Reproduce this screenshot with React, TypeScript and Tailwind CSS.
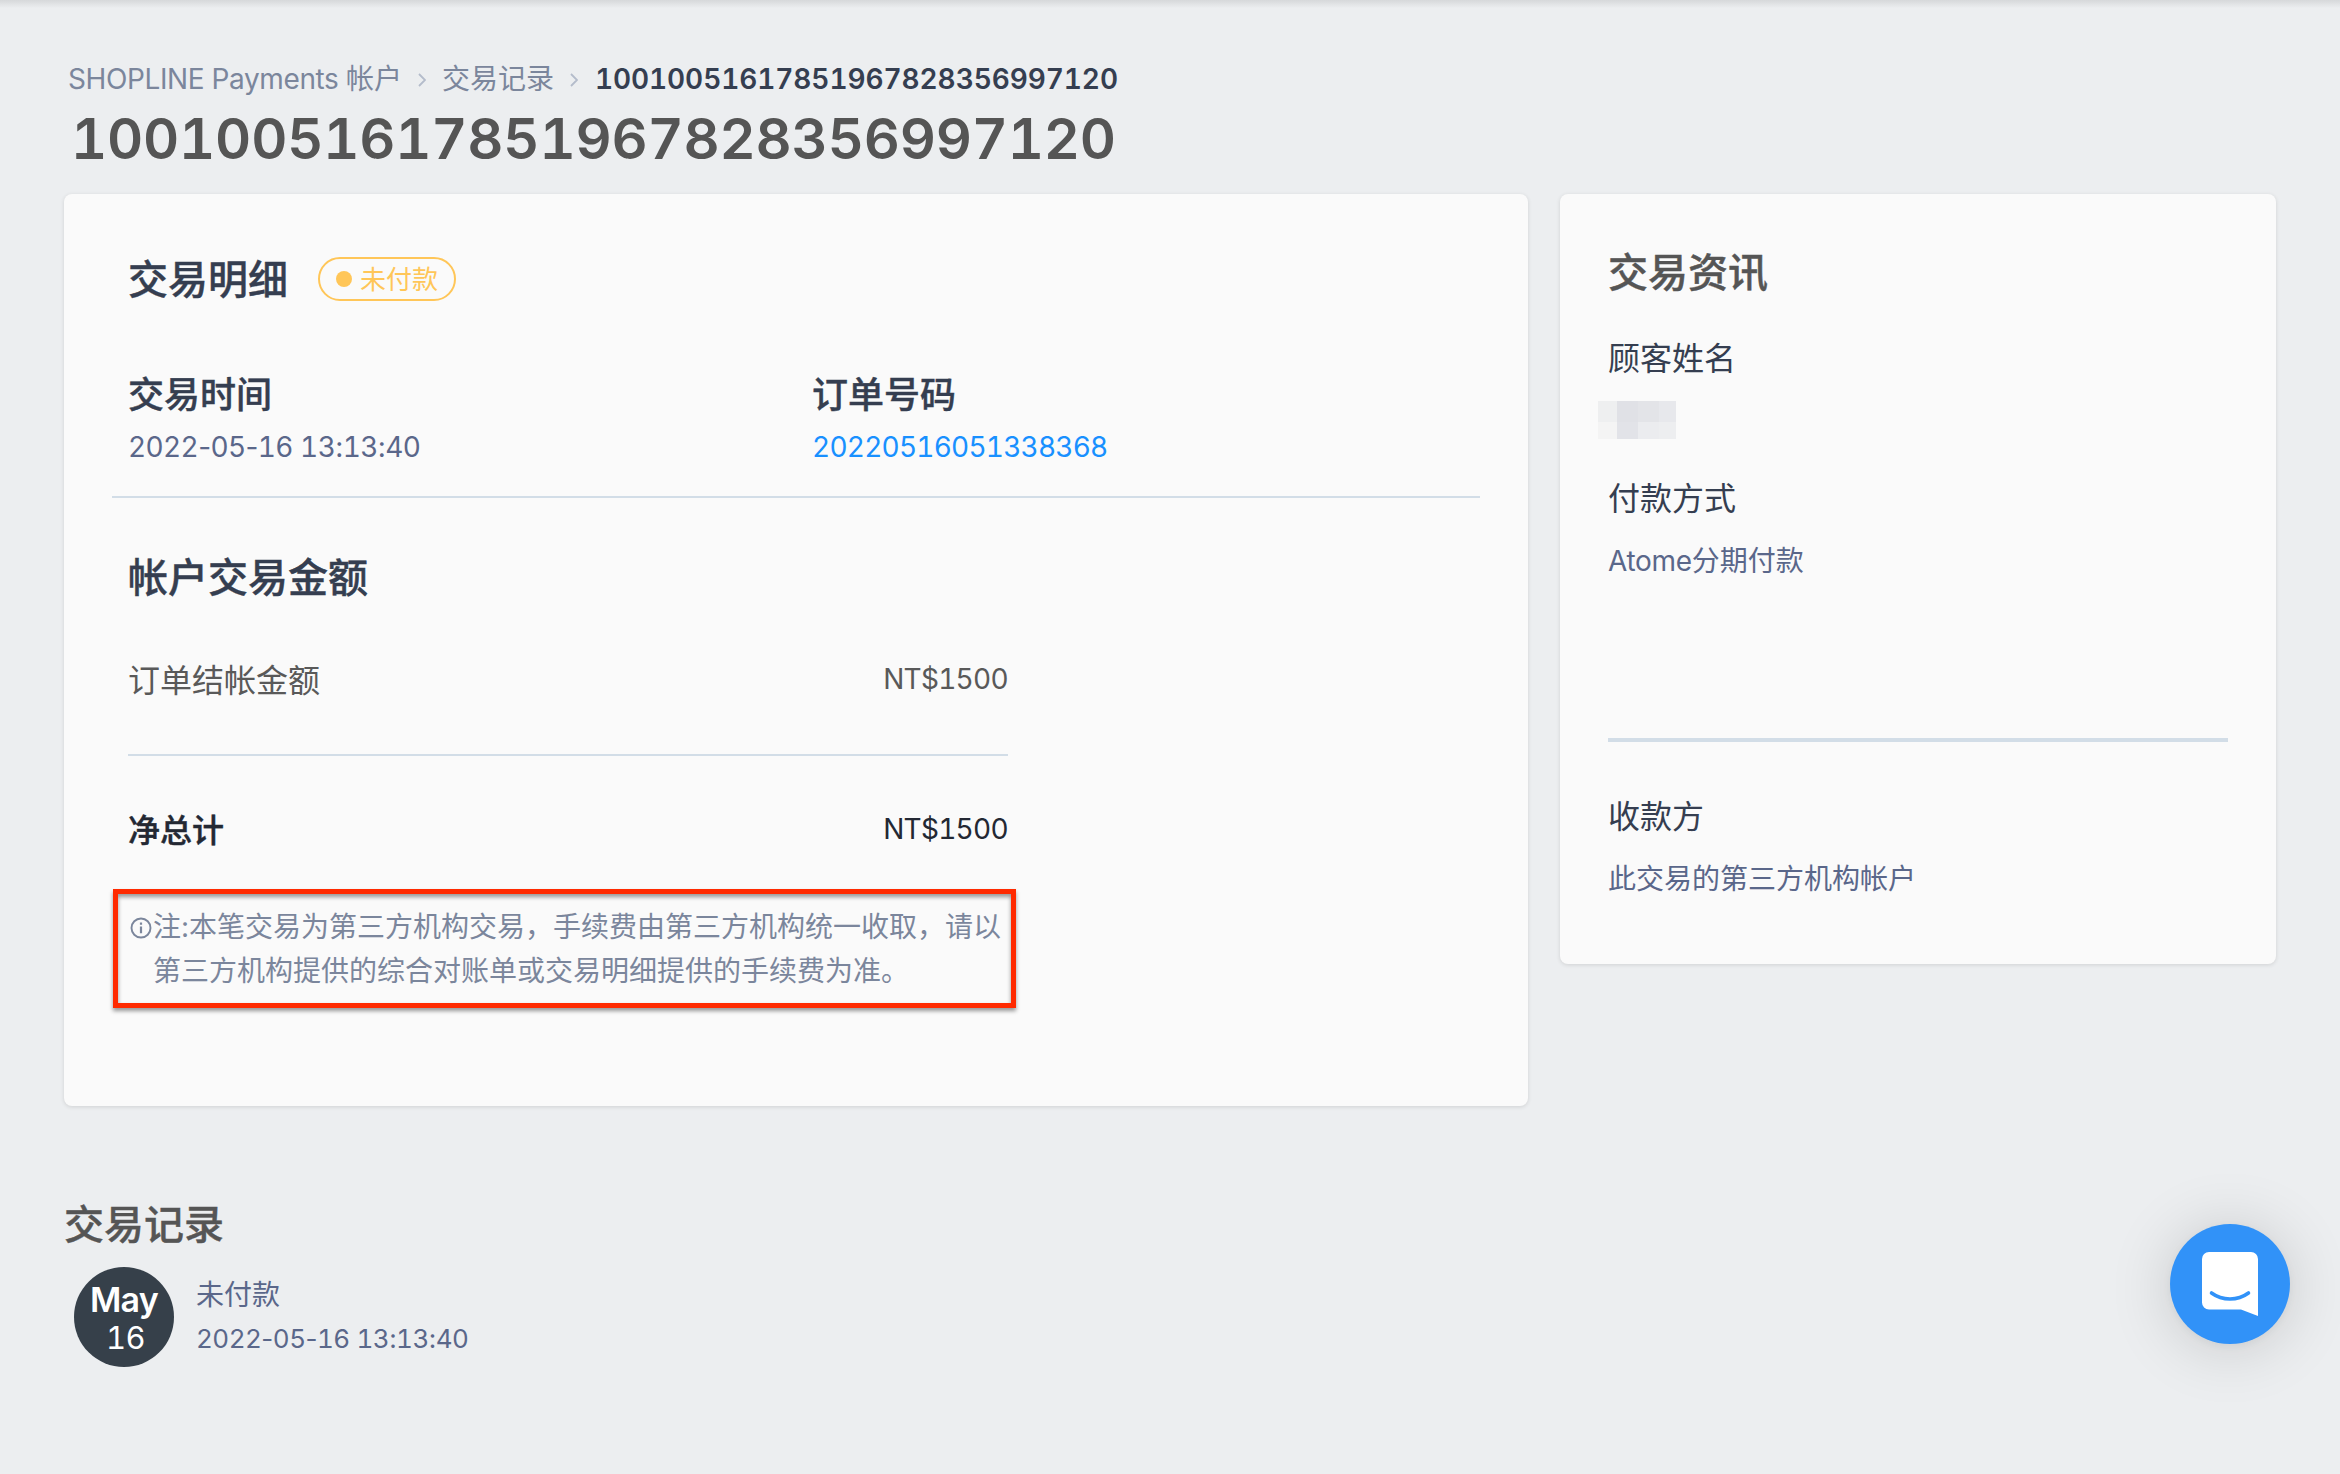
import { ReactNode } from "react";

const TRANSACTION_ID = "10010051617851967828356997120";

function Chevron() {
  return (
    <svg className="w-2 h-3.5 mx-4 mt-px" viewBox="0 0 8 14" fill="none">
      <path d="M1 1l6 6-6 6" stroke="#b4bccb" strokeWidth="1.8" />
    </svg>
  );
}

function Breadcrumb() {
  return (
    <nav className="flex items-center h-10 pl-1 text-[28px] leading-10 text-[#7b869c]">
      <a>
        <span className="tracking-[-0.4px]">SHOPLINE Payments </span>帐户
      </a>
      <Chevron />
      <a>交易记录</a>
      <Chevron />
      <span className="ml-px font-semibold tabular-nums tracking-[-0.08px] text-[#353e50]">
        {TRANSACTION_ID}
      </span>
    </nav>
  );
}

// Digits are tabular, separators keep their natural width
function Timestamp({ value }: { value: string }) {
  return (
    <time className="tabular-nums">
      {value.split(/([-: ])/).map((part, i) =>
        i % 2 ? (
          <span key={i} className="normal-nums">
            {part}
          </span>
        ) : (
          part
        )
      )}
    </time>
  );
}

function StatusPill({ children }: { children: ReactNode }) {
  return (
    <div className="flex items-center w-[138px] h-11 ml-[30px] pl-4 rounded-full border-2 border-[#ffc658] text-[26px] leading-10 text-[#ffc658]">
      <span className="w-4 h-4 mr-2 rounded-full bg-[#ffc658]" />
      <span className="pt-0.5">{children}</span>
    </div>
  );
}

function InfoIcon() {
  return (
    <svg className="w-[22px] h-[22px] mt-3 shrink-0" viewBox="0 0 22 22" fill="none">
      <circle cx="11" cy="11" r="9.5" stroke="currentColor" strokeWidth="1.9" />
      <path d="M11 9.6v6.6M11 5.6v2.2" stroke="currentColor" strokeWidth="2.2" />
    </svg>
  );
}

function DetailCard() {
  return (
    <section className="w-[1464px] h-[912px] px-16 pt-[63px] rounded-lg bg-[#fafafa] shadow-[0_1px_4px_rgba(0,0,0,0.12)]">
      <div className="flex items-center h-11">
        <h2 className="pt-px text-[40px] leading-[44px] font-medium [-webkit-text-stroke:0.4px] text-[#353e50]">
          交易明细
        </h2>
        <StatusPill>未付款</StatusPill>
      </div>

      <div className="grid grid-cols-[684px_1fr] mt-[68px]">
        <div>
          <h3 className="text-4xl leading-[52px] font-medium [-webkit-text-stroke:0.4px] text-[#353e50]">
            交易时间
          </h3>
          <p className="mt-px text-[28px] leading-[50px] tracking-[-0.62px] text-[#5a678a]">
            <Timestamp value="2022-05-16 13:13:40" />
          </p>
        </div>
        <div>
          <h3 className="text-4xl leading-[52px] font-medium [-webkit-text-stroke:0.4px] text-[#353e50]">
            订单号码
          </h3>
          <a className="block mt-px text-[28px] leading-[50px] tabular-nums tracking-[-0.78px] text-[#1890ff]">
            20220516051338368
          </a>
        </div>
      </div>

      <div className="h-0.5 mt-6 -mx-4 bg-[#d2dde7]" />

      <div className="w-[880px]">
        <h2 className="mt-[52px] text-[40px] leading-[56px] font-medium [-webkit-text-stroke:0.4px] text-[#353e50]">
          帐户交易金额
        </h2>
        <div className="flex justify-between h-11 mt-[53px] text-[#595959]">
          <span className="text-[32px] leading-[44px]">订单结帐金额</span>
          <span className="text-[28px] leading-10 tabular-nums tracking-[-0.7px]">NT$1500</span>
        </div>
        <div className="h-0.5 mt-[51px] bg-[#d2dde7]" />
        <div className="flex justify-between h-11 mt-[53px] text-[#232833]">
          <span className="text-[32px] leading-[44px] font-medium [-webkit-text-stroke:0.4px]">
            净总计
          </span>
          <span className="text-[28px] leading-10 tabular-nums tracking-[-0.7px]">NT$1500</span>
        </div>
      </div>

      <div className="flex w-[903px] h-[119px] mt-9 -ml-[15px] pt-[11px] pl-3 border-5 border-[#ff2a00] text-[#7b869c] shadow-[0_3px_4px_rgba(0,0,0,0.4),inset_0_3px_4px_rgba(0,0,0,0.4)]">
        <InfoIcon />
        <p className="ml-px text-[28px] leading-[44px] whitespace-nowrap">
          注:本笔交易为第三方机构交易，手续费由第三方机构统一收取，请以
          <br />
          第三方机构提供的综合对账单或交易明细提供的手续费为准。
        </p>
      </div>
    </section>
  );
}

// Pixelated block that hides the customer's name
function RedactedName() {
  return (
    <div className="grid grid-cols-[19px_21px_21px_17px] grid-rows-[21px_17px] w-[78px] -ml-2.5">
      <span className="bg-[#eeeff0]" />
      <span className="bg-[#e0e1e6]" />
      <span className="bg-[#e3e4e8]" />
      <span className="bg-[#e7e8ec]" />
      <span className="bg-[#f4f4f4]" />
      <span className="bg-[#e2e3e8]" />
      <span className="bg-[#ebecef]" />
      <span className="bg-[#edeef0]" />
    </div>
  );
}

function InfoCard() {
  return (
    <section className="w-[716px] h-[770px] px-12 pt-[49px] rounded-lg bg-[#fafafa] shadow-[0_1px_4px_rgba(0,0,0,0.12)]">
      <h2 className="text-[40px] leading-[60px] font-medium [-webkit-text-stroke:0.4px] text-[#555]">
        交易资讯
      </h2>
      <h3 className="mt-[34px] text-[32px] leading-[44px] text-[#353e50]">顾客姓名</h3>
      <div className="mt-5">
        <RedactedName />
      </div>
      <h3 className="mt-[38px] text-[32px] leading-[44px] text-[#353e50]">付款方式</h3>
      <p className="mt-5 text-[28px] leading-[40px] text-[#5a678a]">
        <span className="tracking-[-0.3px]">Atome</span>分期付款
      </p>
      <div className="h-1 mt-[157px] bg-[#d2dde7]" />
      <h3 className="mt-[53px] text-[32px] leading-[44px] text-[#353e50]">收款方</h3>
      <p className="mt-5 text-[28px] leading-[40px] text-[#5a678a]">
        此交易的第三方机构帐户
      </p>
    </section>
  );
}

function History() {
  return (
    <section className="mt-[95px]">
      <h2 className="text-[40px] leading-[48px] font-medium [-webkit-text-stroke:0.4px] text-[#555]">
        交易记录
      </h2>
      <div className="flex items-center mt-[18px] ml-2.5">
        <div className="flex flex-col items-center w-[100px] h-[100px] pt-3.5 rounded-full bg-[#36404a] text-white">
          <span className="text-[34px] leading-[38px] font-semibold tracking-[-0.8px]">May</span>
          <span className="pl-[3px] text-[31px] leading-[38px] tabular-nums tracking-[-0.6px]">16</span>
        </div>
        <div className="ml-[22px] text-[#5a678a]">
          <p className="text-[28px] leading-[44px]">未付款</p>
          <p className="text-[26px] leading-[44px] tracking-[-0.52px]">
            <Timestamp value="2022-05-16 13:13:40" />
          </p>
        </div>
      </div>
    </section>
  );
}

function ChatLauncher() {
  return (
    <button className="fixed right-[50px] bottom-[130px] w-[120px] h-[120px] rounded-full bg-[#3192f8] shadow-[0_2px_12px_rgba(0,0,0,0.06),0_4px_64px_rgba(0,0,0,0.16)]">
      <svg className="w-14 h-16 mx-auto" viewBox="0 0 56 64" fill="none">
        <path
          d="M7 0h42a7 7 0 0 1 7 7v57l-17-6.5H7a7 7 0 0 1-7-7V7a7 7 0 0 1 7-7z"
          fill="#fff"
        />
        <path
          d="M9.5 41c11 8 26 8 37 0"
          stroke="#3192f8"
          strokeWidth="3.6"
          strokeLinecap="round"
        />
      </svg>
    </button>
  );
}

export default function App() {
  return (
    <div className="w-[2340px] h-[1474px] overflow-hidden bg-[#eceef0] font-['Inter','Noto_Sans_CJK_SC',sans-serif]">
      <div className="h-2 bg-gradient-to-b from-[#d6d8da] to-[#eceef0]" />
      <main className="px-16 pt-[51px]">
        <Breadcrumb />
        <h1 className="mt-2 pl-[7px] text-[56px] leading-[64px] font-semibold tabular-nums tracking-[-0.2px] text-[#555]">
          {TRANSACTION_ID}
        </h1>
        <div className="flex items-start gap-8 mt-[23px]">
          <DetailCard />
          <InfoCard />
        </div>
        <History />
      </main>
      <ChatLauncher />
    </div>
  );
}
